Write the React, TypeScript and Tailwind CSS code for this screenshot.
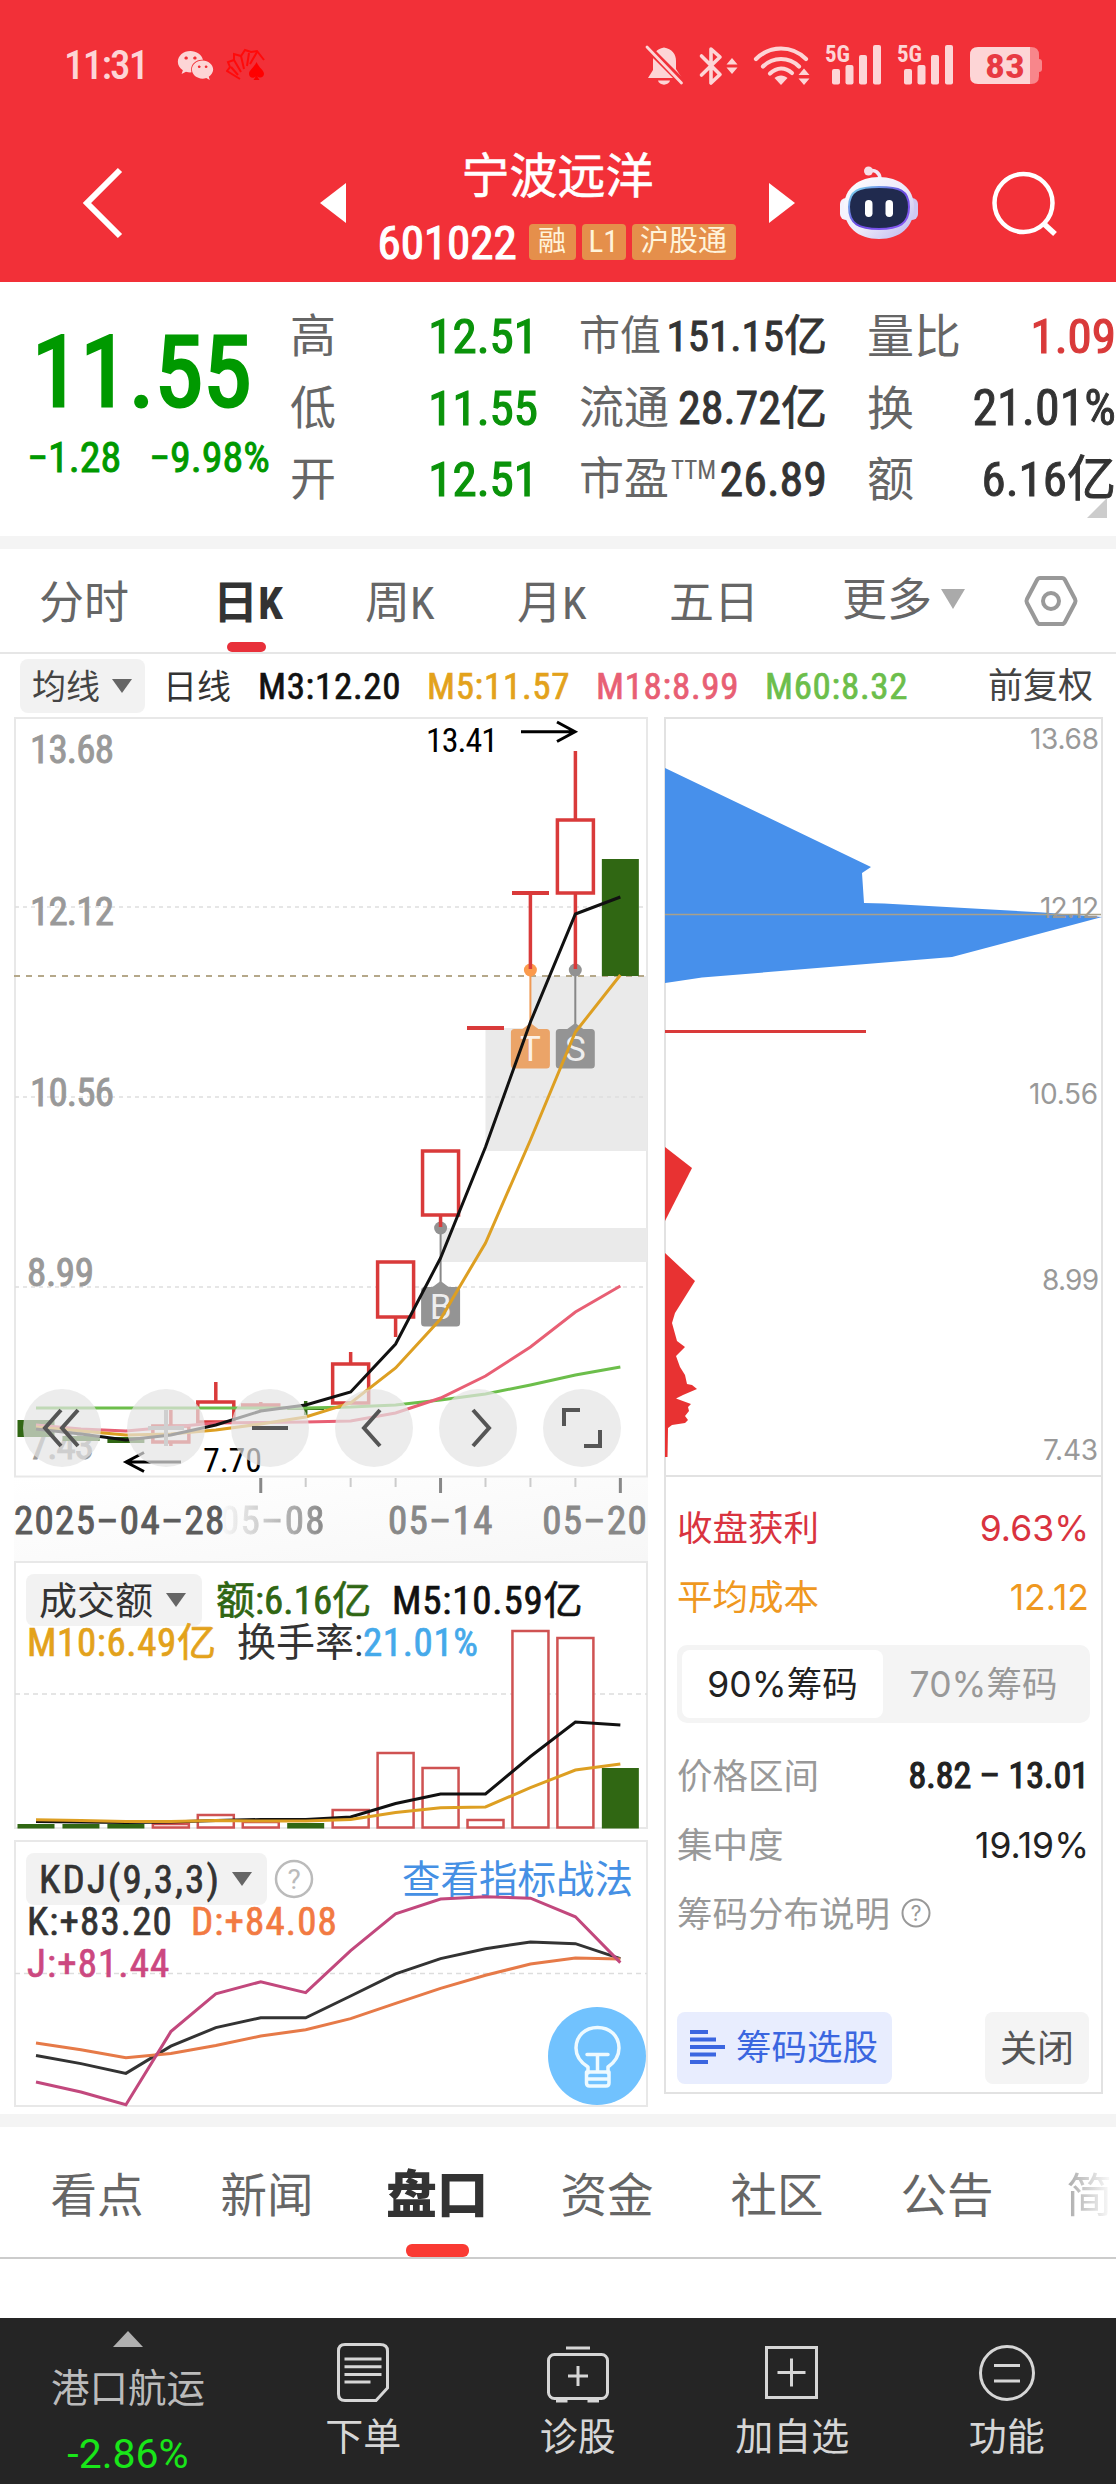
import { useState } from 'react';
import { FaWeixin } from 'react-icons/fa';

const RED = '#d93a3a';
const GREEN = '#306713';

// centre of every trading day on the x axis
const X = Array.from({ length: 14 }, (_, i) => 36 + i * 44.95);

const line = (ys: number[]) => ys.map((y, i) => `${X[i]},${y}`).join(' ');

interface Candle {
  i: number;
  high: number;
  low: number;
  top: number;
  bottom: number;
  up: boolean;
}

const candles: Candle[] = [
  { i: 0, high: 1420, low: 1437, top: 1420, bottom: 1437, up: false },
  { i: 1, high: 1436, low: 1441, top: 1436, bottom: 1441, up: false },
  { i: 2, high: 1437, low: 1443, top: 1437, bottom: 1443, up: false },
  { i: 3, high: 1410, low: 1446, top: 1426, bottom: 1442, up: true },
  { i: 4, high: 1382, low: 1423, top: 1402, bottom: 1422, up: true },
  { i: 5, high: 1402, low: 1412, top: 1405, bottom: 1407, up: true },
  { i: 6, high: 1401, low: 1415, top: 1407, bottom: 1410, up: false },
  { i: 7, high: 1352, low: 1404, top: 1364, bottom: 1403, up: true },
  { i: 8, high: 1262, low: 1337, top: 1262, bottom: 1317, up: true },
  { i: 9, high: 1151, low: 1227, top: 1151, bottom: 1215, up: true },
  { i: 12, high: 751, low: 969, top: 820, bottom: 893, up: true },
  { i: 13, high: 859, low: 976, top: 859, bottom: 976, up: false },
];

const ma = [
  { color: '#6cbe4b', ys: [1408, 1408, 1408, 1408, 1408, 1408, 1408, 1407, 1405, 1400, 1394, 1385, 1375, 1367] },
  { color: '#e85f74', ys: [1425, 1429, 1431, 1427, 1423, 1422.5, 1422, 1421, 1413, 1398, 1376, 1347, 1312, 1286] },
  { color: '#dd9f22', ys: [1427, 1431, 1435, 1434, 1430, 1424, 1417, 1403, 1368, 1319, 1243, 1140, 1032, 975] },
  { color: '#111111', ys: [1429, 1434, 1440, 1435, 1425, 1411, 1405, 1392, 1344, 1258, 1147, 1022, 914, 897] },
];

const volumes = [
  { top: 1824, up: false },
  { top: 1824, up: false },
  { top: 1824, up: false },
  { top: 1824, up: true },
  { top: 1815, up: true },
  { top: 1822, up: true },
  { top: 1823, up: false },
  { top: 1810, up: true },
  { top: 1753, up: true },
  { top: 1768, up: true },
  { top: 1820, up: true },
  { top: 1631, up: true },
  { top: 1638, up: true },
  { top: 1768, up: false },
];

const volM5 = [1821.5, 1822, 1822.5, 1822, 1820.5, 1819.5, 1819.5, 1817, 1803.5, 1794, 1794, 1756.5, 1722, 1725];
const volM10 = [1819.7, 1820.5, 1821.5, 1821.5, 1820.5, 1821, 1821, 1819.5, 1812.5, 1807.7, 1807, 1787.7, 1770, 1764];

const kdjJ = [2082, 2092, 2104.7, 2031.6, 1993.8, 1981.8, 1992.7, 1950.6, 1913.9, 1899, 1896.8, 1898.2, 1916.8, 1962.6];
const kdjK = [2055.6, 2063.6, 2073.4, 2046.2, 2027.6, 2017.8, 2017.8, 1996, 1973.8, 1958.6, 1948.8, 1941.9, 1943.7, 1958.6];
const kdjD = [2042.9, 2049.8, 2057.8, 2053.5, 2045.5, 2036, 2029.8, 2018.6, 2003.3, 1988.4, 1975.3, 1964, 1957.9, 1959];

const kTabs = [
  { name: '分时', width: 'ml-[39px] w-[174px]' },
  { name: '日K', width: 'w-[152px]' },
  { name: '周K', width: 'w-[152px]' },
  { name: '月K', width: 'w-[152px]' },
  { name: '五日', width: 'w-[173px]' },
];

const infoTabs = ['看点', '新闻', '盘口', '资金', '社区', '公告'];

function Caret({ className = '' }: { className?: string }) {
  return (
    <svg viewBox="0 0 20 14" className={`h-[14px] w-[20px] shrink-0 ${className}`}>
      <path d="M0 0H20L10 14Z" fill="currentColor" />
    </svg>
  );
}

function Signal({ x }: { x: number }) {
  return (
    <g transform={`translate(${x} 0)`}>
      <text x="0" y="61" fontSize="23" fontWeight="700" textLength="25" lengthAdjust="spacingAndGlyphs">5G</text>
      <rect x="7" y="68" width="8" height="15.500" rx="2" />
      <rect x="20.500" y="64" width="8" height="19.500" rx="2" />
      <rect x="34" y="54" width="8" height="29.500" rx="2" />
      <rect x="48" y="44" width="8" height="39.500" rx="2" />
    </g>
  );
}

function StatusBar() {
  return (
    <div className="flex h-[130px] items-center pl-[64px] text-[#fdd5d6]">
      <span className="w-[113px] text-[41px] leading-none font-medium tracking-[-1.8px]">11:31</span>
      <FaWeixin className="size-[37px]" />
      <svg viewBox="226 50 42 34" className="ml-[12px] h-[34px] w-[42px]" fill="none" stroke="#ff0a0a" strokeWidth="2">
        <path d="M240 81L227 73L230 69L228 64L234 62L234 56L241 58L245 52L251 54L257 53L264 62" />
        <path d="M238 77L231 69M241 74L234 62M244 71L241 58M247 68L249 55M250 66L257 54" />
        <path d="M256.500 64C254 70 249 72 249 76C249 80 254 81 256 78L253.500 82H259.500L257 78C260 81 264 79 264 76C264 72 259 70 256.500 64Z" fill="#ff0000" stroke="none" />
      </svg>
      <svg viewBox="640 38 408 52" className="ml-[372px] h-[52px] w-[408px]" fill="currentColor">
        {/* muted bell */}
        <path d="M664 46.500C672 48 676 53 676 60V68L682 77H648L653 69V60C653 53 656 48 664 46.500Z" />
        <path d="M658 79.500H670C669 85 659 85 658 79.500Z" />
        <path d="M645 44L684 83" stroke="#f23038" strokeWidth="7" />
        <path d="M647 46L681.500 82" stroke="currentColor" strokeWidth="2.800" strokeLinecap="round" />
        {/* bluetooth */}
        <path d="M701.500 55L720 73.500L711 82V48L720 56L701.500 74" fill="none" stroke="currentColor" strokeWidth="3.600" strokeLinejoin="round" strokeLinecap="round" />
        <path d="M732 57L737.500 63.500H726.500ZM732 73L737.500 66.500H726.500Z" />
        {/* wifi */}
        <g fill="none" stroke="currentColor" strokeWidth="4.200" strokeLinecap="round">
          <path d="M756 58C770 44 792 44 806 58" />
          <path d="M763 65.500C773 55.500 789 55.500 799 65.500" />
          <path d="M770 72.500C777 66 785 66 792 72" />
        </g>
        <path d="M774.500 77C778 73.500 784 73.500 787.500 77L781 84Z" />
        <path d="M804 67.500L809.500 74H798.500ZM804 84L809.500 77.500H798.500Z" />
        <Signal x={825} />
        <Signal x={897} />
        {/* battery */}
        <path d="M1030 46H1031Q1039 46 1039 54V75Q1039 83 1031 83H1030Z" fill="#f8868b" />
        <path d="M1039 58Q1042 58 1042 61V68Q1042 71 1039 71Z" fill="#f8868b" />
        <path d="M978 46H1030V83H978Q970 83 970 75V54Q970 46 978 46Z" />
        <text x="985" y="76.500" fontSize="34" fontWeight="700" fill="#e83a42" textLength="40" lengthAdjust="spacingAndGlyphs">83</text>
      </svg>
    </div>
  );
}

function Robot() {
  return (
    <svg viewBox="838 162 82 78" className="h-[78px] w-[82px]">
      <defs>
        <linearGradient id="shell" x1="0" y1="0" x2="1" y2="1">
          <stop offset="0" stopColor="#ffffff" />
          <stop offset="0.550" stopColor="#ece9fa" />
          <stop offset="1" stopColor="#b9b4ee" />
        </linearGradient>
        <linearGradient id="rim" x1="0" y1="0" x2="1" y2="1">
          <stop offset="0" stopColor="#7be3f0" />
          <stop offset="0.500" stopColor="#6a4be0" />
          <stop offset="1" stopColor="#8b5cf6" />
        </linearGradient>
      </defs>
      <path d="M869 169C875 167 880 171 880 177" fill="none" stroke="#f3e8f6" strokeWidth="3.500" />
      <circle cx="868.500" cy="169" r="4.500" fill="#f6dfe8" />
      <rect x="840" y="196" width="14" height="22" rx="6" fill="#f4f2fd" />
      <rect x="904" y="196" width="14" height="22" rx="6" fill="#cfc8f3" />
      <path d="M879 175C899 175 914 186 914 205C914 225 900 237 879 237C858 237 844 225 844 205C844 186 859 175 879 175Z" fill="url(#shell)" />
      <path d="M879 185C899 185 909 188 909 205C909 222 899 227 879 227C859 227 849 222 849 205C849 188 859 185 879 185Z" fill="#202a4e" stroke="url(#rim)" strokeWidth="2" />
      <rect x="865" y="198" width="7.500" height="17" rx="3.700" fill="#fff" />
      <rect x="885.500" y="198" width="7.500" height="17" rx="3.700" fill="#fff" />
    </svg>
  );
}

function Header() {
  return (
    <header className="h-[282px] bg-[#f23038] text-white">
      <StatusBar />
      <div className="flex h-[146px] items-center">
        <svg viewBox="80 162 46 78" className="ml-[80px] h-[78px] w-[46px]" fill="none" stroke="#fff" strokeWidth="6">
          <path d="M120 168L87 201L120 234" />
        </svg>
        <svg viewBox="0 0 26 40" className="ml-[194px] h-[40px] w-[26px]">
          <path d="M26 0V40L0 20Z" fill="#fff" />
        </svg>
        <div className="flex w-[423px] flex-col items-center pt-[14px]">
          <h1 className="text-[48px] leading-[64px] [-webkit-text-stroke:0.6px_#fff]">宁波远洋</h1>
          <div className="flex h-[67px] w-[360px] items-center gap-[6px] whitespace-nowrap">
            <span className="w-[145px] text-[47px] leading-none [-webkit-text-stroke:1.2px_#fff]">601022</span>
            <span className="flex h-[36px] w-[47px] items-center justify-center rounded-[4px] bg-[#e58f4b] text-[28px] text-[#fff3da]">融</span>
            <span className="flex h-[36px] w-[44px] items-center justify-center rounded-[4px] bg-[#e58f4b] text-[31px] text-[#fff3da]">L1</span>
            <span className="flex h-[36px] w-[104px] items-center justify-center rounded-[4px] bg-[#e58f4b] text-[29px] text-[#fff3da]">沪股通</span>
          </div>
        </div>
        <svg viewBox="0 0 26 40" className="h-[40px] w-[26px]">
          <path d="M0 0V40L26 20Z" fill="#fff" />
        </svg>
        <div className="ml-[43px] w-[82px]">
          <Robot />
        </div>
        <svg viewBox="988 166 72 72" className="ml-[68px] h-[72px] w-[72px]" fill="none" stroke="#fff" strokeWidth="4.500">
          <circle cx="1023.500" cy="202" r="29" />
          <path d="M1043 222L1055 233" strokeWidth="5.500" />
        </svg>
      </div>
    </header>
  );
}

function Quote() {
  return (
    <section className="relative flex h-[254px] overflow-hidden pt-[19px] leading-[71.5px] whitespace-nowrap">
      <div className="w-[290px] shrink-0 text-[#009900]">
        <div className="mt-[20px] pl-[32px] text-[98px] leading-[104px] [-webkit-text-stroke:3px]">11.55</div>
        <div className="flex pl-[27px] text-[42px] leading-[66px] [-webkit-text-stroke:0.9px]">
          <span className="w-[122px]">−1.28</span>
          <span>−9.98%</span>
        </div>
      </div>
      <div className="w-[248px] shrink-0 text-[46px] text-[#666]">
        {[['高', '12.51'], ['低', '11.55'], ['开', '12.51']].map(([k, v]) => (
          <div key={k} className="flex justify-between">
            <span>{k}</span>
            <span className="text-[49px] text-[#0a930a] [-webkit-text-stroke:1.2px]">{v}</span>
          </div>
        ))}
      </div>
      <div className="ml-[41px] w-[248px] shrink-0 text-[#666]">
        <div className="flex items-center justify-between">
          <span className="text-[41px]">市值</span>
          <span className="text-[43px] text-[#333] [-webkit-text-stroke:0.9px]">151.15亿</span>
        </div>
        <div className="flex items-center justify-between">
          <span className="text-[45px]">流通</span>
          <span className="text-[46px] text-[#333] [-webkit-text-stroke:0.9px]">28.72亿</span>
        </div>
        <div className="flex items-center justify-between">
          <span className="flex text-[45px]">市盈<i className="ml-[2px] text-[25px] leading-[54px] not-italic">TTM</i></span>
          <span className="text-[48px] text-[#333] [-webkit-text-stroke:0.9px]">26.89</span>
        </div>
      </div>
      <div className="ml-[40px] w-[249px] shrink-0 text-[47px] text-[#666]">
        <div className="flex justify-between">
          <span>量比</span>
          <span className="text-[49px] text-[#d93a3a] [-webkit-text-stroke:1.2px]">1.09</span>
        </div>
        <div className="flex justify-between">
          <span>换</span>
          <span className="text-[50px] text-[#333] [-webkit-text-stroke:0.9px]">21.01%</span>
        </div>
        <div className="flex justify-between">
          <span>额</span>
          <span className="text-[49px] text-[#333] [-webkit-text-stroke:0.9px]">6.16亿</span>
        </div>
      </div>
      <svg viewBox="0 0 20 20" className="absolute right-[9px] bottom-[18px] size-[20px]">
        <path d="M20 0V20H0Z" fill="#ccc" />
      </svg>
    </section>
  );
}

function PeriodTabs() {
  const [active, setActive] = useState('日K');
  return (
    <nav className="flex h-[105px] border-b-2 border-[#e6e6e6] text-[45px] leading-[109px] text-[#666]">
      {kTabs.map((t) => (
        <button key={t.name} onClick={() => setActive(t.name)} className={`${t.width} relative shrink-0 text-left`}>
          {active === t.name ? (
            <>
              <span className="font-bold text-[#333]">{t.name}</span>
              <i className="absolute bottom-0 left-[14px] h-[10px] w-[39px] rounded-[5px] bg-[#e8303a]" />
            </>
          ) : (
            t.name
          )}
        </button>
      ))}
      <button className="flex w-[181px] shrink-0 items-center">
        更多
        <svg viewBox="0 0 24 20" className="mb-[4px] ml-[9px] h-[20px] w-[24px]">
          <path d="M0 0H24L12 20Z" fill="#aaa" />
        </svg>
      </button>
      <svg viewBox="0 0 56 56" className="mt-[24px] size-[56px]" fill="none" stroke="#999" strokeWidth="4">
        <path d="M17 5H39Q41 5 42 7L52 26Q53 28 52 30L42 49Q41 51 39 51H17Q15 51 14 49L4 30Q3 28 4 26L14 7Q15 5 17 5Z" />
        <circle cx="28" cy="28" r="8" />
      </svg>
    </nav>
  );
}

function MaLegend() {
  return (
    <div className="flex h-[63px] items-center pt-[2px] text-[37px] leading-none tracking-[0.7px] whitespace-nowrap [-webkit-text-stroke:0.7px]">
      <button className="mb-[2px] ml-[20px] flex h-[54px] w-[125px] items-center rounded-[8px] bg-[#f2f2f2] pt-[2px] pl-[12px] text-[34px] tracking-normal text-[#444] [-webkit-text-stroke:0px]">
        均线
        <Caret className="mb-[2px] ml-[12px] text-[#666]" />
      </button>
      <span className="ml-[18px] w-[95px] text-[34px] tracking-normal text-[#333] [-webkit-text-stroke:0px]">日线</span>
      <span className="w-[169px] text-[#111]">M3:12.20</span>
      <span className="w-[169px] text-[#e3a21b]">M5:11.57</span>
      <span className="w-[169px] text-[#e85f74]">M18:8.99</span>
      <span className="w-[223px] text-[#6cbe4b]">M60:8.32</span>
      <span className="text-[35px] tracking-normal text-[#444] [-webkit-text-stroke:0px]">前复权</span>
    </div>
  );
}

function Flag({ x, y, label, color }: { x: number; y: number; label: string; color: string }) {
  return (
    <g>
      <path d={`M${x} ${y}L${x + 8} ${y + 6}H${x + 16}Q${x + 19.5} ${y + 6} ${x + 19.5} ${y + 9.5}V${y + 42}Q${x + 19.5} ${y + 45.5} ${x + 16} ${y + 45.5}H${x - 16}Q${x - 19.5} ${y + 45.5} ${x - 19.5} ${y + 42}V${y + 9.5}Q${x - 19.5} ${y + 6} ${x - 16} ${y + 6}H${x - 8}Z`} fill={color} />
      <text x={x} y={y + 38} fontSize="35" fill="#fff" fillOpacity="0.850" textAnchor="middle" className="font-['Roboto']">{label}</text>
    </g>
  );
}

function RoundButton({ x, children }: { x: number; children: React.ReactNode }) {
  return (
    <g transform={`translate(${x} 1428)`}>
      <circle r="39" fill="#e4e4e4" fillOpacity="0.700" />
      <g fill="none" stroke="#555" strokeWidth="4">{children}</g>
    </g>
  );
}

function CandleChart() {
  return (
    <svg viewBox="14 717 634 761" className="block h-[761px] w-[634px]">
      <rect x="15" y="718" width="632" height="758.500" fill="#fff" stroke="#e8e8e8" strokeWidth="2" />
      {/* unfilled gaps */}
      <path d="M530 976H647V1151H485.500V1028H530Z" fill="#eaeaea" />
      <rect x="441" y="1228" width="206" height="34" fill="#eaeaea" />
      {[907, 1097, 1287].map((y) => (
        <path key={y} d={`M15 ${y}H647`} stroke="#dedede" strokeWidth="1.500" strokeDasharray="4 4" />
      ))}
      <path d="M14 976H647" stroke="#b5a88a" strokeWidth="2" strokeDasharray="6 6" />
      <g fill="#999" stroke="#999" strokeWidth="0.900" fontSize="39">
        <text x="30" y="763" textLength="84">13.68</text>
        <text x="30" y="925" textLength="84">12.12</text>
        <text x="30" y="1106" textLength="84">10.56</text>
        <text x="27" y="1286" textLength="67">8.99</text>
        <text x="29" y="1459" textLength="65">7.43</text>
      </g>

      {/* trade markers */}
      <path d="M530.400 970V1026" stroke="#ef9a55" strokeWidth="2" />
      <path d="M575.300 970V1026M440.600 1228V1285" stroke="#888" strokeWidth="2" />
      <Flag x={530.4} y={1023} label="T" color="#eba468" />
      <Flag x={575.3} y={1023} label="S" color="#949494" />
      <Flag x={440.6} y={1281} label="B" color="#949494" />

      <circle cx="530.400" cy="970" r="6.500" fill="#fb9a4c" />
      <circle cx="575.300" cy="970" r="6.500" fill="#929292" />
      <circle cx="440.600" cy="1228" r="6.500" fill="#929292" />

      {candles.map((c) => (
        <g key={c.i} stroke={c.up ? RED : GREEN} strokeWidth="3.500">
          <path d={`M${X[c.i]} ${c.high}V${c.top}M${X[c.i]} ${c.bottom}V${c.low}`} />
          {c.up ? (
            <rect x={X[c.i] - 18} y={c.top} width="36" height={c.bottom - c.top} fill="#fff" strokeWidth="3.500" />
          ) : (
            <rect x={X[c.i] - 18.5} y={c.top} width="37" height={c.bottom - c.top} fill={GREEN} stroke="none" />
          )}
        </g>
      ))}
      <path d="M467 1028H504M512 893H549" stroke={RED} strokeWidth="4" />
      <path d="M530.400 893V969" stroke={RED} strokeWidth="3.500" />

      {ma.map((m) => (
        <polyline key={m.color} points={line(m.ys)} fill="none" stroke={m.color} strokeWidth="3" />
      ))}

      <g stroke="#000" strokeWidth="3" fill="none">
        <path d="M521 731.700H575M557 722L575 731.700L557 741.500" />
        <path d="M181 1462H126M144 1452.500L126 1462L144 1471.500" />
      </g>
      <g fontSize="34">
        <text x="426" y="752" textLength="72">13.41</text>
        <text x="203" y="1472" textLength="59">7.70</text>
      </g>

      <RoundButton x={62}><path d="M-1 -18L-17 0L-1 18M16 -18L0 0L16 18" /></RoundButton>
      <RoundButton x={166}><path d="M0 -18V18M-18 0H18" stroke="#cfcfcf" /></RoundButton>
      <RoundButton x={270}><path d="M-18 0H18" /></RoundButton>
      <RoundButton x={374}><path d="M6 -18L-10 0L6 18" /></RoundButton>
      <RoundButton x={478}><path d="M-5 -18L11 0L-5 18" /></RoundButton>
      <RoundButton x={582}><path d="M-18 -2V-18H-2M18 2V18H2" /></RoundButton>
    </svg>
  );
}

function DateAxis() {
  return (
    <div className="h-[83px] bg-linear-to-br from-white to-[#f7f7f7]">
      <svg viewBox="14 1478 634 18" className="block h-[18px] w-[634px]" stroke="#888">
        {[5, 9, 13].map((i) => (
          <path key={i} d={`M${X[i]} 1478V1493`} strokeWidth="3" />
        ))}
        {[6, 7, 8, 10, 11, 12].map((i) => (
          <path key={i} d={`M${X[i]} 1478V1487`} stroke="#ccc" strokeWidth="2" />
        ))}
      </svg>
      <div className="flex text-[39px] leading-[50px] tracking-[1.3px] whitespace-nowrap text-[#888] [-webkit-text-stroke:0.9px]">
        <span className="w-[206px] text-[#5c5c5c]">2025–04–28</span>
        <span className="w-[170px] bg-linear-to-r from-transparent to-[#8c8c8c] to-60% bg-clip-text text-transparent">05–08</span>
        <span className="w-[156px]">05–14</span>
        <span>05–20</span>
      </div>
    </div>
  );
}

function VolumeChart() {
  return (
    <div className="relative h-[268px] w-[634px]">
      <svg viewBox="14 1561 634 268" className="absolute inset-0 size-full">
        <rect x="15" y="1562" width="632" height="266" fill="#fff" stroke="#e8e8e8" strokeWidth="2" />
        <path d="M15 1694H647" stroke="#ddd" strokeWidth="1.500" strokeDasharray="5 4" />
        {volumes.map((v, i) =>
          v.up ? (
            <rect key={i} x={X[i] - 18} y={v.top} width="36" height={1827.5 - v.top} fill="#fff" stroke="#cf5252" strokeWidth="2.500" />
          ) : (
            <rect key={i} x={X[i] - 18.5} y={v.top} width="37" height={1828.5 - v.top} fill={GREEN} />
          ),
        )}
        <polyline points={line(volM5)} fill="none" stroke="#111" strokeWidth="3" />
        <polyline points={line(volM10)} fill="none" stroke="#dd9f22" strokeWidth="3" />
      </svg>
      <div className="relative flex h-[65px] items-center pt-[13px] text-[39px] leading-none tracking-[0.8px] whitespace-nowrap [-webkit-text-stroke:0.7px]">
        <button className="ml-[12px] flex h-[52px] w-[176px] items-center rounded-[8px] bg-[#f2f2f2] pt-[2px] pl-[13px] text-[38px] tracking-normal text-[#333] [-webkit-text-stroke:0px]">
          成交额
          <Caret className="mb-[2px] ml-[13px] text-[#666]" />
        </button>
        <span className="ml-[14px] w-[176px] pt-[2px] tracking-normal text-[#2f6613]">额:6.16亿</span>
        <span className="pt-[2px] text-[#111]">M5:10.59亿</span>
      </div>
      <div className="relative flex h-[34px] items-center pl-[13px] text-[39px] leading-none tracking-[0.6px] whitespace-nowrap [-webkit-text-stroke:0.7px]">
        <span className="w-[210px] text-[#e3a21b]">M10:6.49亿</span>
        <span className="w-[126px] tracking-normal text-[#333] [-webkit-text-stroke:0px]">换手率:</span>
        <span className="text-[#45a9ea]">21.01%</span>
      </div>
    </div>
  );
}

function KdjChart() {
  return (
    <div className="relative mt-[11px] h-[268px] w-[634px]">
      <svg viewBox="14 1840 634 268" className="absolute inset-0 size-full">
        <rect x="15" y="1841" width="632" height="265" fill="#fff" stroke="#e8e8e8" strokeWidth="2" />
        <path d="M15 1973.500H647" stroke="#ddd" strokeWidth="1.500" strokeDasharray="5 4" />
      </svg>
      <div className="relative flex h-[65px] items-center pt-[13px] text-[38px] leading-none whitespace-nowrap">
        <button className="ml-[12px] flex h-[52px] w-[241px] items-center rounded-[8px] bg-[#f2f2f2] pl-[13px] text-left text-[#333]">
          <span className="w-[193px] pt-[2px] text-[39px] tracking-[2.2px] [-webkit-text-stroke:0.7px]">KDJ(9,3,3)</span>
          <Caret className="text-[#666]" />
        </button>
        <svg viewBox="0 0 40 40" className="ml-[7px] size-[40px]">
          <circle cx="20" cy="20" r="18" fill="none" stroke="#bbb" strokeWidth="2.500" />
          <text x="20" y="30" fontSize="28" fill="#bbb" textAnchor="middle" className="font-['Roboto']">?</text>
        </svg>
        <span className="ml-[88px] pt-[2px] text-[38.5px] text-[#4590e4]">查看指标战法</span>
      </div>
      <div className="relative pl-[13px] text-[39px] leading-[42px] tracking-[1.1px] whitespace-nowrap [-webkit-text-stroke:0.7px]">
        <div className="-mt-[4px] flex">
          <span className="w-[164px] text-[#333]">K:+83.20</span>
          <span className="text-[#f27a42]">D:+84.08</span>
        </div>
        <div className="text-[#cc4880]">J:+81.44</div>
      </div>
      <svg viewBox="14 1840 634 268" className="pointer-events-none absolute inset-0 size-full">
        <g fill="none" strokeWidth="3">
          <polyline points={line(kdjK)} stroke="#333" />
          <polyline points={line(kdjD)} stroke="#e67a48" />
          <polyline points={line(kdjJ)} stroke="#c2487d" />
        </g>
        <circle cx="597" cy="2056" r="49" fill="#71c2fe" />
        <g fill="none" stroke="#eefaff" strokeWidth="3.500" strokeLinejoin="round" strokeLinecap="round">
          <path d="M588 2073V2067C580 2062 576 2056 576 2048C576 2036 585 2027.500 597.500 2027.500C610 2027.500 619 2036 619 2048C619 2056 615 2062 608 2067V2073" />
          <path d="M586.500 2072H609V2083Q609 2086 606 2086H589.500Q586.500 2086 586.500 2083ZM588 2079H608M587 2054.500H608M597.500 2055V2071" />
        </g>
      </svg>
    </div>
  );
}

function ChipPanel() {
  const [range, setRange] = useState('90%筹码');
  return (
    <aside className="ml-[16px] h-[1377px] w-[439px] border-2 border-[#e2e2e2] font-['Inter','Noto_Sans_CJK_SC',sans-serif]">
      <svg viewBox="666 719 435 757" className="block h-[757px] w-[435px] overflow-visible">
        <path d="M665 768L871 867L862 873L864 903L884 903.500L1043 912.500L1102 917L952 957L702 977.500L672 982L665 983Z" fill="#4790eb" />
        <g fill="#999" fontSize="28" textAnchor="end">
          <text x="1099" y="749" textLength="69">13.68</text>
          <text x="1099" y="918" textLength="59">12.12</text>
          <text x="1098" y="1104" textLength="69">10.56</text>
          <text x="1099" y="1290" textLength="57">8.99</text>
          <text x="1098" y="1460" textLength="55">7.43</text>
        </g>
        <path d="M665 914.500H1101" stroke="#a9a08a" strokeWidth="1.500" />
        <path d="M665 1031.500H866" stroke="#d93a3a" strokeWidth="3" />
        <path d="M665 1147L692 1168L665 1221Z" fill="#e83232" />
        <path d="M665 1253L695 1281L675 1313L672 1323L677 1341L685 1347L676 1356L680 1367L685 1375L687 1384L692 1385L697 1389L683 1395L676 1398.500L691 1404L688 1407L689 1411L685 1416L688 1420L685 1423L672 1425L668 1428L667.500 1457H665Z" fill="#e83232" />
        <path d="M666 1476H1101" stroke="#e2e2e2" strokeWidth="2" />
      </svg>
      <div className="pr-[12px] pl-[11px] text-[35.5px] leading-[69px] text-[#999]">
        <div className="mt-[18px] flex justify-between text-[#d9333f]">
          <span>收盘获利</span>
          <span>9.63%</span>
        </div>
        <div className="flex justify-between text-[#ef981f]">
          <span>平均成本</span>
          <span>12.12</span>
        </div>
        <div className="mt-[13px] flex h-[78px] w-[413px] rounded-[10px] bg-[#f4f4f4] p-[5px] leading-[70px]">
          {['90%筹码', '70%筹码'].map((r) => (
            <button
              key={r}
              onClick={() => setRange(r)}
              className={range === r ? 'h-[68px] w-[201px] rounded-[8px] bg-white text-[#222]' : 'h-[68px] w-[201px] text-[#999]'}
            >
              {r}
            </button>
          ))}
        </div>
        <div className="mt-[19px] flex justify-between">
          <span>价格区间</span>
          <span className="font-['Roboto_Condensed'] text-[36px] text-[#222] [-webkit-text-stroke:1.2px]">8.82 – 13.01</span>
        </div>
        <div className="flex justify-between">
          <span>集中度</span>
          <span className="text-[#222]">19.19%</span>
        </div>
        <div className="flex items-center">
          <span>筹码分布说明</span>
          <svg viewBox="0 0 32 32" className="mb-[3px] ml-[10px] size-[32px]">
            <circle cx="16" cy="16" r="13.500" fill="none" stroke="#999" strokeWidth="2" />
            <text x="16" y="23.500" fontSize="21" fill="#999" textAnchor="middle">?</text>
          </svg>
        </div>
        <div className="mt-[63px] flex justify-between leading-[74px]">
          <button className="flex h-[72px] w-[215px] items-center rounded-[8px] bg-[#e8edfe] pl-[13px] text-[#3b66e0]">
            <svg viewBox="0 0 35 34" className="mr-[11px] mb-[2px] h-[34px] w-[35px] shrink-0" stroke="#3b66e0" strokeWidth="4">
              <path d="M0 2H18M0 9.500H26M0 17H35M0 24.500H26M0 32H18" />
            </svg>
            筹码选股
          </button>
          <button className="h-[72px] w-[104px] rounded-[8px] bg-[#f4f4f4] text-[37px] text-[#555]">关闭</button>
        </div>
      </div>
    </aside>
  );
}

function InfoTabs() {
  const [active, setActive] = useState('盘口');
  return (
    <nav className="flex h-[132px] overflow-hidden border-b-2 border-[#ccc] pl-[12px] text-[46.5px] leading-[138px] whitespace-nowrap text-[#666]">
      {infoTabs.map((t) => (
        <button key={t} onClick={() => setActive(t)} className="relative w-[170px] shrink-0">
          {active === t ? (
            <>
              <span className="text-[51px] font-black text-[#333]">{t}</span>
              <i className="absolute bottom-0 left-[54px] h-[13px] w-[63px] rounded-[6px] bg-[#fa3a33]" />
            </>
          ) : (
            t
          )}
        </button>
      ))}
      <span className="ml-[34px] bg-linear-to-r from-[#aaa] to-white bg-clip-text text-transparent">简</span>
    </nav>
  );
}

function FooterItem({ label, children }: { label: string; children: React.ReactNode }) {
  return (
    <button className="flex w-[214.500px] flex-col items-center pt-[21px]">
      <svg viewBox="0 0 68 68" className="size-[68px]" fill="none" stroke="#d6d6d6" strokeWidth="3">
        {children}
      </svg>
      <span className="text-[38px] leading-[61px] text-[#d6d6d6]">{label}</span>
    </button>
  );
}

function Footer() {
  return (
    <footer className="flex h-[166px] bg-[#252525]">
      <div className="flex w-[256px] flex-col items-center pt-[13px] whitespace-nowrap">
        <svg viewBox="0 0 30 16" className="h-[16px] w-[30px]">
          <path d="M15 0L30 16H0Z" fill="#b0b0b0" />
        </svg>
        <span className="mt-[15px] text-[38.5px] leading-[54px] text-[#bbb]">港口航运</span>
        <span className="mt-[11px] font-['Roboto'] text-[41px] leading-[54px] text-[#19e619]">-2.86%</span>
      </div>
      <FooterItem label="下单">
        <path d="M16 5.500H51Q58.500 5.500 58.500 12V49L47 61.500H16Q9.500 61.500 9.500 55V12Q9.500 5.500 16 5.500Z" />
        <path d="M15.500 20H52.500M15.500 27.700H52.500M15.500 35.400H52.500M15.500 43H41.500" />
      </FooterItem>
      <FooterItem label="诊股">
        <rect x="4.500" y="15.500" width="59" height="44" rx="6" />
        <path d="M22 9H46M24 37H44M34 27V47" />
        <path d="M12 61.500H23.500M43.500 61.500H55" strokeWidth="4" />
      </FooterItem>
      <FooterItem label="加自选">
        <rect x="8.500" y="8.500" width="50" height="50" />
        <path d="M19.500 33.500H47.500M33.500 19.500V47.500" />
      </FooterItem>
      <FooterItem label="功能">
        <circle cx="34" cy="34" r="26.500" />
        <path d="M21 26.500H47M21 42H47" />
      </FooterItem>
    </footer>
  );
}

export default function App() {
  return (
    <main lang="zh-CN" className="flex h-[2484px] w-[1116px] flex-col overflow-hidden bg-white font-['Roboto_Condensed','Noto_Sans_CJK_SC',sans-serif]">
      <Header />
      <Quote />
      <div className="h-[13px] bg-[#f4f4f4]" />
      <PeriodTabs />
      <MaLegend />
      <div className="flex h-[1397px] pl-[14px]">
        <div className="w-[634px]">
          <CandleChart />
          <DateAxis />
          <VolumeChart />
          <KdjChart />
        </div>
        <ChipPanel />
      </div>
      <div className="h-[13px] bg-[#f4f4f4]" />
      <InfoTabs />
      <div className="flex-1" />
      <Footer />
    </main>
  );
}
